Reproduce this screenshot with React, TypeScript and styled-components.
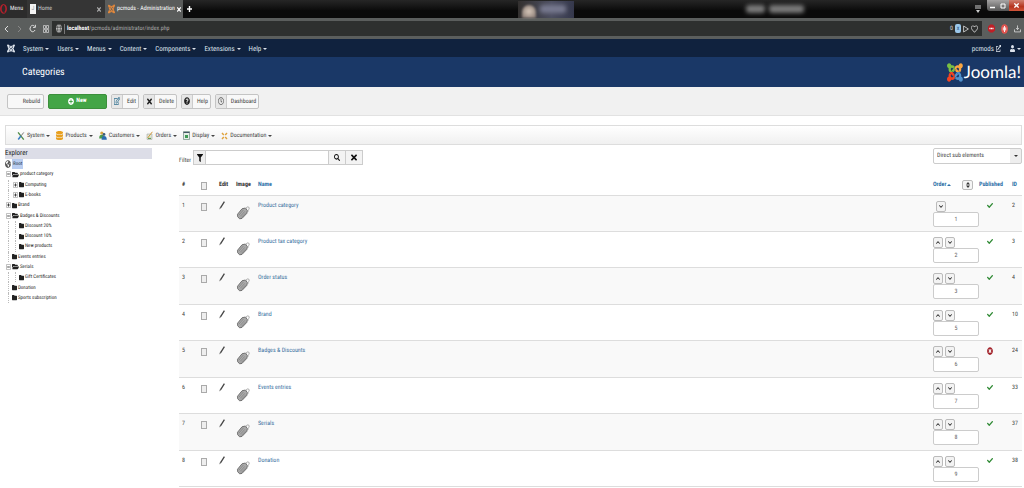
import React, { useState } from 'react';
import styled, { createGlobalStyle, css } from 'styled-components';
import type { IconType } from 'react-icons';
import { FaJoomla, FaOpera, FaFilter, FaSearch, FaTimes, FaCheck, FaTimesCircle, FaUser, FaExternalLinkAlt, FaQuestionCircle, FaPlusCircle, FaChevronUp, FaChevronDown, FaFolder, FaFolderOpen, FaGlobe, FaGlobeAmericas, FaRegHeart, FaRegClock, FaRegEdit, FaDatabase, FaUserFriends } from 'react-icons/fa';

const Global = createGlobalStyle`
  * { box-sizing: border-box; }
  body { margin: 0; background: #fff; text-rendering: geometricPrecision; }
  body, button, input, select { font-family: "Roboto Condensed", Roboto, "Liberation Sans", Arial, sans-serif; font-size: 6px; line-height: 10px; color: #444; }
  button, input, select { margin: 0; padding: 0; text-rendering: inherit; }
  a { text-decoration: none; color: inherit; }
  svg { display: block; flex: none; }
`;

const Row = css`display: flex; align-items: center;`;

const IconBox = styled.span<{ $w: number; $h: number; $color?: string }>`
  display: block;
  flex: none;
  width: ${p => p.$w}px;
  height: ${p => p.$h}px;
  color: ${p => p.$color || 'inherit'};
  svg { width: 100%; height: 100%; }
`;
const Icon = ({ i: Glyph, w, h, color }: { i: IconType; w: number; h: number; color?: string }) => (
  <IconBox $w={w} $h={h} $color={color}><Glyph preserveAspectRatio="none" /></IconBox>
);

/* ---- browser frame ---- */
const TabStrip = styled.div`
  ${Row}
  height: 18px;
  background: linear-gradient(#262626, #0a0a0a 60%);
  color: #ddd;
`;
const MenuButton = styled.button`
  ${Row}
  gap: 3px;
  width: 27px;
  height: 18px;
  border: 0;
  background: #2c2c2c;
  color: #eee;
  white-space: nowrap;
`;
const Tab = styled.div<{ $active?: boolean }>`
  ${Row}
  gap: 2px;
  width: 78px;
  height: 18px;
  padding: 0 4px 0 3px;
  background: ${p => (p.$active ? '#5a5c5b' : '#353535')};
  color: ${p => (p.$active ? '#fff' : '#ccc')};
  white-space: nowrap;
`;
const PageGlyph = styled.span`
  width: 6px;
  height: 10px;
  background: #f4f4f4;
  color: #999;
  text-align: center;
`;
const IconButton = styled.button`
  ${Row}
  justify-content: center;
  border: 0;
  background: none;
  color: inherit;
`;
const TabClose = styled(IconButton)`margin-left: auto;`;
const NewTab = styled(IconButton)`width: 13px; color: #fff;`;
const StripSpace = styled.div<{ $grow: number }>`flex: ${p => p.$grow} 1 0;`;
const Avatar = styled.div`
  ${Row}
  gap: 4px;
  width: 56px;
  height: 17px;
  padding-left: 4px;
  background: linear-gradient(90deg, #33302f, #4c4e60 60%, #35384c);
`;
const Face = styled.span`
  width: 14px;
  height: 13px;
  margin-top: 4px;
  border-radius: 7px 7px 0 0;
  background: radial-gradient(#d8c8ba, #7d706a);
  filter: blur(1px);
`;
const Smudge = styled.span<{ $w: number }>`
  width: ${p => p.$w}px;
  height: 8px;
  border-radius: 3px;
  background: #77798f;
  filter: blur(2px);
`;
const GreySmudges = styled.div`${Row} gap: 4px; filter: grayscale(1);`;
const WindowControls = styled.div`
  display: flex;
  align-self: flex-start;
  margin-left: 6px;
  height: 11px;
  border-radius: 0 0 0 3px;
  overflow: hidden;
`;
const WindowButton = styled(IconButton)<{ $close?: boolean }>`
  width: ${p => (p.$close ? '15px' : '11px')};
  background: ${p => (p.$close ? 'linear-gradient(#d08070, #b5341f 60%, #d2553a)' : 'linear-gradient(#a5a3a3, #555)')};
  color: #fff;
`;
const AddressBar = styled.div`
  ${Row}
  height: 21px;
  background: #5b5e5d;
  color: #ddd;
`;
const BarButton = styled(IconButton)`width: 13px; height: 14px;`;
const AddressBox = styled.div`
  ${Row}
  gap: 2px;
  flex: 1;
  height: 15px;
  margin-right: 3px;
  padding: 0 4px;
  background: #2e302f;
`;
const AddressText = styled.a`
  flex: 1;
  padding-left: 2px;
  border-left: 1px solid #777;
  color: #aaa;
  b { color: #fff; }
`;
const Badge = styled.span`
  ${Row}
  justify-content: center;
  width: 6px;
  height: 9px;
  border-radius: 2px;
  background: #9cc8ea;
  color: #1b4a78;
`;

/* ---- Joomla header ---- */
const NavBar = styled.nav`
  ${Row}
  height: 18px;
  padding: 1px 3px 0 7px;
  background: #10223e;
  color: #dde3ec;
  font-size: 7px;
`;
const NavLinks = styled.div`${Row} flex: 1; gap: 8px; margin-left: 8px;`;
const NavLink = styled.a`${Row} gap: 2px; white-space: nowrap;`;
const UserArea = styled.div`${Row} gap: 9px;`;
const Caret = styled.span`
  display: block;
  border: 2px solid transparent;
  border-top-color: currentColor;
  border-bottom: 0;
`;
const Header = styled.header`
  ${Row}
  justify-content: space-between;
  height: 30px;
  padding: 0 3px 0 22px;
  background: #1a3867;
  color: #fff;
`;
const Title = styled.h1`margin: 0; padding-top: 2px; font-size: 10px; line-height: 12px; font-weight: 400;`;
const Brand = styled.div`${Row} gap: 1px; font: 17px/20px Lato, "Liberation Sans", sans-serif;`;
const BrandMark = styled.div`display: grid;`;
const MarkPart = styled.div<{ $clip: string; $color: string }>`
  grid-area: 1 / 1;
  color: ${p => p.$color};
  clip-path: polygon(${p => p.$clip});
`;

const Toolbar = styled.div`
  ${Row}
  gap: 4px;
  height: 29px;
  padding: 0 7px;
  background: #f1f1f1;
  border-bottom: 1px solid #e2e2e2;
`;
const ToolButton = styled.button<{ $w: number; $primary?: boolean }>`
  ${Row}
  justify-content: center;
  gap: 2px;
  width: ${p => p.$w}px;
  height: 15px;
  border: 1px solid ${p => (p.$primary ? '#3c8f3c' : '#c4c4c4')};
  border-radius: 2px;
  background: ${p => (p.$primary ? '#43a546' : '#f8f8f8')};
  color: ${p => (p.$primary ? '#fff' : '#444')};
  overflow: hidden;
  white-space: nowrap;
`;
const ToolIcon = styled.span`
  ${Row}
  justify-content: center;
  width: 11px;
  height: 13px;
  border-right: 1px solid #ccc;
  background: #e7e7e7;
  color: #222;
`;
const ToolText = styled.span`flex: 1; padding-top: 1px; text-align: center;`;
const RebuildText = styled(ToolText)`padding-left: 12px;`;

const SubMenu = styled.nav`
  ${Row}
  gap: 6px;
  height: 20px;
  margin: 9px 2px 3px 5px;
  padding: 1px 0 0 11px;
  border: 1px solid #ddd;
  background: linear-gradient(#fff, #f0f0f0);
`;
const SubLink = styled.a`${Row} gap: 2px; white-space: nowrap;`;

/* ---- page body ---- */
const Body = styled.main`display: flex; align-items: flex-start; padding: 0 2px 0 5px;`;
const Sidebar = styled.aside`width: 147px; margin-right: 27px;`;
const SideTitle = styled.h2`
  margin: 0;
  height: 11px;
  font-size: 7px;
  line-height: 11px;
  font-weight: 400;
  background: #dcdde7;
  color: #222;
`;
const Tree = styled.ul`
  display: grid;
  grid-auto-rows: 1fr;
  min-height: 144px;
  margin: 0;
  padding: 0;
  list-style: none;
  font-size: 5px;
  color: #222;
`;
const TreeItem = styled.li<{ $root?: boolean }>`
  ${Row}
  gap: 1px;
  padding-left: ${p => (p.$root ? 0 : 1)}px;
`;
const Rail = styled.span<{ $wide?: boolean }>`
  align-self: stretch;
  width: 3px;
  margin-right: ${p => (p.$wide ? 3 : 2)}px;
  border-right: 1px dotted #bbb;
`;
const Selected = styled.a`padding: 0 1px; background: #b9cdf0; color: #234;`;
const Content = styled.section`flex: 1; min-width: 0;`;
const FilterRow = styled.form`
  display: flex;
  align-items: flex-start;
  height: 20px;
`;
const FilterLabel = styled.label`width: 14px; padding-top: 8px;`;
const Addon = styled.span`
  ${Row}
  justify-content: center;
  width: 12px;
  height: 15px;
  margin-top: 2px;
  border: 1px solid #ccc;
  border-right: 0;
  background: #eee;
  color: #111;
`;
const FilterInput = styled.input`
  width: 124px;
  height: 15px;
  margin-top: 2px;
  padding: 0 3px;
  border: 1px solid #ccc;
`;
const FilterButton = styled.button`
  ${Row}
  justify-content: center;
  width: 17px;
  height: 15px;
  margin-top: 2px;
  border: 1px solid #ccc;
  border-left: 0;
  background: #f3f3f3;
  color: #111;
`;
const SelectWrap = styled.div`
  position: relative;
  width: 89px;
  margin-left: auto;
`;
const Select = styled.select`
  appearance: none;
  width: 100%;
  height: 16px;
  padding: 0 14px 0 3px;
  border: 1px solid #ccc;
  border-radius: 2px;
  background: linear-gradient(90deg, #fff, #fff) no-repeat left / 76px 100%, #eee;
`;
const SelectArrow = styled.span`
  position: absolute;
  right: 4px;
  top: 7px;
  pointer-events: none;
  color: #333;
`;

const Table = styled.table`
  width: 100%;
  height: 319px;
  table-layout: fixed;
  border-collapse: collapse;
`;
const Th = styled.th<{ $w?: number; $flush?: boolean }>`
  width: ${p => (p.$w ? p.$w + 'px' : 'auto')};
  height: 27px;
  padding: 12px 0 0 ${p => (p.$flush ? 0 : 3)}px;
  text-align: left;
  vertical-align: top;
  color: #333;
  font-weight: 700;
  white-space: nowrap;
  a { color: #2f70a8; }
`;
const Tr = styled.tr`
  border-top: 1px solid #ddd;
  &:nth-child(odd) { background: #f9f9f9; }
  &:last-child { border-bottom: 1px solid #ddd; }
`;
const Td = styled.td`
  height: 36px;
  padding: 5px 0 0 3px;
  vertical-align: top;
  a { color: #39719f; }
`;
const IconTd = styled(Td)`padding: 6px 0 0 8px;`;
const ImageTd = styled(Td)`padding-top: 9px;`;
const OrderTd = styled(Td)`padding-left: 0;`;
const CheckTd = styled(Td)`padding-top: 7px;`;
const Check = styled.input`
  display: block;
  appearance: none;
  width: 6px;
  height: 8px;
  border: 1px solid #aaa;
  background: #eee;
  &:checked { background: #39719f; }
`;
const HeadCheck = styled(Check)`margin-top: 2px;`;
const OrderHead = styled.span`${Row} justify-content: space-between; padding-right: 6px;`;
const SortLink = styled.a`${Row} gap: 1px;`;
const UpCaret = styled(Caret)`transform: rotate(180deg);`;
const SortButton = styled.button`
  ${Row}
  justify-content: center;
  width: 11px;
  height: 10px;
  border: 1px solid #bbb;
  border-radius: 2px;
  background: #f5f5f5;
`;
const Arrows = styled.div<{ $only?: boolean }>`
  display: flex;
  gap: 2px;
  padding-left: ${p => (p.$only ? 3 : 0)}px;
`;
const OrderButton = styled.button`
  ${Row}
  justify-content: center;
  width: 10px;
  height: 11px;
  border: 1px solid #bbb;
  border-radius: 2px;
  background: #f3f3f3;
  color: #111;
`;
const OrderInput = styled.input`
  display: block;
  width: 46px;
  height: 15px;
  border: 1px solid #ccc;
  border-radius: 2px;
  background: #fff;
  text-align: center;
  color: #666;
`;

const MARK = [
  { color: '#7ac143', clip: '0 0, 50% 0, 50% 50%, 0 50%' },
  { color: '#f9a541', clip: '50% 0, 100% 0, 100% 50%, 50% 50%' },
  { color: '#f44321', clip: '0 50%, 50% 50%, 50% 100%, 0 100%' },
  { color: '#5091cd', clip: '50% 50%, 100% 50%, 100% 100%, 50% 100%' },
];
const JoomlaMark = () => (
  <BrandMark>
    {MARK.map(m => <MarkPart key={m.color} $color={m.color} $clip={m.clip}><Icon i={FaJoomla} w={16} h={21} /></MarkPart>)}
  </BrandMark>
);

const Pencil = () => (
  <svg width="6" height="9" viewBox="0 0 6 9"><path d="M5.4 0.6 1.6 6.6" stroke="#444" strokeWidth="1.3" /><path d="M.4 8.6 1 6l1.2.8Z" fill="#444" /></svg>
);
const TagIcon = () => (
  <svg width="14" height="15" viewBox="0 0 14 15">
    <path d="M1.6 9.2 6 3.8 9.4 3 11.4 5.6 10.8 8.4 6 13.4 3.6 13.8 1.6 11.6Z" fill="#aaa" stroke="#666" strokeWidth=".9" />
    <path d="M3 10 7.4 5M4.2 11.4 8.8 6.4M5.4 12.4 9.8 7.8" stroke="#777" strokeWidth=".6" />
    <path d="M9.6 4.4C10 1.4 13 1.2 13.2 3c.2 1.4-1.2 1.6-1.4 4" fill="none" stroke="#999" strokeWidth=".8" />
  </svg>
);
const Expander = ({ open }: { open?: boolean }) => (
  <svg width="5" height="6" viewBox="0 0 5 6"><path d="M.5.5h4v5h-4Z" fill="#fff" stroke="#999" strokeWidth=".6" /><path d={open ? 'M1.2 3h2.6' : 'M1.2 3h2.6M2.5 1.4v3.2'} stroke="#222" strokeWidth=".8" /></svg>
);
const Plus = () => (
  <svg width="5" height="8" viewBox="0 0 5 8"><path d="M2.5 1v6M0 4h5" stroke="#fff" strokeWidth="1.4" /></svg>
);
const ChevronIcon = ({ d, color }: { d: string; color: string }) => (
  <svg width="5" height="8" viewBox="0 0 5 8"><path d={d} fill="none" stroke={color} strokeWidth="1" /></svg>
);
const ReloadIcon = () => (
  <svg width="7" height="9" viewBox="0 0 7 9"><path d="M5.6 2.4A2.6 3.2 0 1 0 6 6M6.4.8v2.6H4" fill="none" stroke="#ddd" strokeWidth="1" /></svg>
);
const GridIcon = () => (
  <svg width="6" height="8" viewBox="0 0 6 8"><path d="M.5.5h2v3h-2ZM3.5.5h2v3h-2ZM.5 4.5h2v3h-2ZM3.5 4.5h2v3h-2Z" fill="none" stroke="#ccc" strokeWidth=".8" /></svg>
);
const OrdersIcon = () => (
  <svg width="7" height="9" viewBox="0 0 7 9"><path d="M1 3h5v5.4H1Z" fill="#dfe6d5" stroke="#999" strokeWidth=".5" /><path d="M1.6 7 6.4.8" stroke="#d59a3c" strokeWidth="1" /><path d="M2 7.4h3" stroke="#5b9a4a" /></svg>
);
const DisplayIcon = () => (
  <svg width="7" height="9" viewBox="0 0 7 9"><path d="M.5.5h6v8h-6Z" fill="#e3eee5" stroke="#6f8a80" strokeWidth=".7" /><path d="M.5 1.5h6" stroke="#456" /><path d="M2 4h3v3H2Z" fill="#3f9a55" /></svg>
);
const DocsIcon = () => (
  <svg width="7" height="8" viewBox="0 0 7 8"><path d="M1 1l1.8 2M6 1 4.2 3M1 7l1.8-2M6 7 4.2 5" stroke="#e0a33c" strokeWidth="1.4" /></svg>
);
const ToolsIcon = () => (
  <svg width="8" height="10" viewBox="0 0 9 10"><path d="M1.2 1 7.6 9" stroke="#4f8a45" strokeWidth="1.5" /><path d="M7.6 1 4.6 4.8" stroke="#777" strokeWidth="1.1" /><path d="M4.4 5 1.4 9" stroke="#3b7fc4" strokeWidth="1.8" /></svg>
);
const CustomersIcon = () => (
  <svg width="8" height="9" viewBox="0 0 8 9"><circle cx="2.8" cy="2" r="1.6" fill="#d9a441" /><path d="M.2 7.4C.2 4.6 1.2 3.8 2.8 3.8s2.6.8 2.6 3.6Z" fill="#4d9a4a" /><circle cx="5" cy="3.4" r="1.4" fill="#3a5a7a" /><path d="M2.6 8.8c0-2.8.8-3.8 2.4-3.8s2.8 1 2.8 3.8Z" fill="#2a6db0" /></svg>
);

const NAV = ['System', 'Users', 'Menus', 'Content', 'Components', 'Extensions', 'Help'];

const SUB = [
  { text: 'System', icon: <ToolsIcon /> },
  { text: 'Products', icon: <Icon i={FaDatabase} w={7} h={9} color="#e8a020" /> },
  { text: 'Customers', icon: <CustomersIcon /> },
  { text: 'Orders', icon: <OrdersIcon /> },
  { text: 'Display', icon: <DisplayIcon /> },
  { text: 'Documentation', icon: <DocsIcon /> },
];

type TreeNode = { text: string; depth: 1 | 2; state?: 'open' | 'closed' };
const TREE: TreeNode[] = [
  { text: 'product category', depth: 1, state: 'open' },
  { text: 'Computing', depth: 2, state: 'closed' },
  { text: 'E-books', depth: 2, state: 'closed' },
  { text: 'Brand', depth: 1, state: 'closed' },
  { text: 'Badges & Discounts', depth: 1, state: 'open' },
  { text: 'Discount 20%', depth: 2 },
  { text: 'Discount 10%', depth: 2 },
  { text: 'New products', depth: 2 },
  { text: 'Events entries', depth: 1 },
  { text: 'Serials', depth: 1, state: 'open' },
  { text: 'Gift Certificates', depth: 2 },
  { text: 'Donation', depth: 1 },
  { text: 'Sports subscription', depth: 1 },
];

const ROWS = [
  { name: 'Product category', order: 1, id: 2, ok: true },
  { name: 'Product tax category', order: 2, id: 3, ok: true },
  { name: 'Order status', order: 3, id: 4, ok: true },
  { name: 'Brand', order: 5, id: 10, ok: true },
  { name: 'Badges & Discounts', order: 6, id: 24, ok: false },
  { name: 'Events entries', order: 7, id: 33, ok: true },
  { name: 'Serials', order: 8, id: 37, ok: true },
  { name: 'Donation', order: 9, id: 38, ok: true },
];

export default function App() {
  const [filter, setFilter] = useState('');
  return (
    <>
      <Global />
      <TabStrip>
        <MenuButton><Icon i={FaOpera} w={7} h={10} color="#b3202c" />Menu</MenuButton>
        <Tab><PageGlyph>J</PageGlyph>Home<TabClose aria-label="Close Home"><Icon i={FaTimes} w={4} h={7} color="#aaa" /></TabClose></Tab>
        <Tab $active><Icon i={FaJoomla} w={7} h={10} color="#e98a3a" />pcmods - Administration<TabClose aria-label="Close tab"><Icon i={FaTimes} w={4} h={7} /></TabClose></Tab>
        <NewTab aria-label="New tab"><Plus /></NewTab>
        <StripSpace $grow={32} />
        <Avatar><Face /><Smudge $w={26} /></Avatar>
        <StripSpace $grow={17} />
        <GreySmudges><Smudge $w={19} /><Smudge $w={35} /></GreySmudges>
        <StripSpace $grow={17} />
        <svg width="6" height="8" viewBox="0 0 6 8"><path d="M0 1h6M0 3h6" stroke="#ccc" /><path d="M1 5h4L3 8Z" fill="#ccc" /></svg>
        <WindowControls>
          <WindowButton aria-label="Minimize"><svg width="5" height="6" viewBox="0 0 5 6"><path d="M0 4.5h5" stroke="#fff" strokeWidth="1.6" /></svg></WindowButton>
          <WindowButton aria-label="Restore"><svg width="6" height="6" viewBox="0 0 6 6"><path d="M1 1h4v4H1Z" fill="none" stroke="#fff" /></svg></WindowButton>
          <WindowButton $close aria-label="Close"><Icon i={FaTimes} w={5} h={7} /></WindowButton>
        </WindowControls>
      </TabStrip>
      <AddressBar>
        <BarButton aria-label="Back"><ChevronIcon d="M4 1 1 4l3 3" color="#ddd" /></BarButton>
        <BarButton aria-label="Forward"><ChevronIcon d="M1 1l3 3-3 3" color="#888" /></BarButton>
        <BarButton aria-label="Reload"><ReloadIcon /></BarButton>
        <BarButton aria-label="Speed dial"><GridIcon /></BarButton>
        <AddressBox>
          <Icon i={FaGlobe} w={6} h={9} color="#bbb" />
          <AddressText href="#"><b>localhost</b>/pcmods/administrator/index.php</AddressText>
          <span>0</span>
          <Badge>x</Badge>
          <svg width="6" height="8" viewBox="0 0 6 8"><path d="M.6 1 5.4 4 .6 7Z" fill="none" stroke="#ccc" strokeWidth=".9" /></svg>
          <Icon i={FaRegHeart} w={7} h={8} color="#ccc" />
        </AddressBox>
        <BarButton aria-label="Ad blocker"><svg width="7" height="9" viewBox="0 0 8 9"><path d="M2.4 0h3.2L8 2.6v3.8L5.6 9H2.4L0 6.4V2.6Z" fill="#c01f26" /><path d="M1.6 4.5h4.8" stroke="#fff" strokeWidth="1.5" strokeDasharray="1.3 .4" /></svg></BarButton>
        <BarButton aria-label="Blocker"><svg width="7" height="10" viewBox="0 0 7 10"><ellipse cx="3.5" cy="5" rx="3.5" ry="4.8" fill="#e0544f" /><path d="M3.5 2v6M2.3 3.4v3M4.7 3.4v3" stroke="#fff" strokeWidth=".9" /></svg></BarButton>
        <BarButton aria-label="Downloads"><svg width="7" height="9" viewBox="0 0 8 9"><path d="M4 1v4.6M2.4 4 4 5.8 5.6 4M.6 5.6v2.8h6.8V5.6" fill="none" stroke="#ddd" strokeWidth=".9" /></svg></BarButton>
      </AddressBar>

      <NavBar>
        <Icon i={FaJoomla} w={8} h={9} />
        <NavLinks>{NAV.map(t => <NavLink href="#" key={t}>{t}<Caret /></NavLink>)}</NavLinks>
        <UserArea>
          <NavLink href="#">pcmods<Icon i={FaExternalLinkAlt} w={5} h={7} /></NavLink>
          <NavLink href="#" aria-label="User menu"><Icon i={FaUser} w={5} h={7} /><Caret /></NavLink>
        </UserArea>
      </NavBar>
      <Header>
        <Title>Categories</Title>
        <Brand><JoomlaMark />Joomla!</Brand>
      </Header>

      <Toolbar>
        <ToolButton $w={37}><RebuildText>Rebuild</RebuildText></ToolButton>
        <ToolButton $w={59} $primary><Icon i={FaPlusCircle} w={6} h={7} /><b>New</b></ToolButton>
        <ToolButton $w={28}><ToolIcon><Icon i={FaRegEdit} w={6} h={8} color="#2f6f8f" /></ToolIcon><ToolText>Edit</ToolText></ToolButton>
        <ToolButton $w={34}><ToolIcon><Icon i={FaTimes} w={5} h={9} /></ToolIcon><ToolText>Delete</ToolText></ToolButton>
        <ToolButton $w={30}><ToolIcon><Icon i={FaQuestionCircle} w={6} h={8} /></ToolIcon><ToolText>Help</ToolText></ToolButton>
        <ToolButton $w={44}><ToolIcon><Icon i={FaRegClock} w={6} h={8} color="#555" /></ToolIcon><ToolText>Dashboard</ToolText></ToolButton>
      </Toolbar>
      <SubMenu>{SUB.map(s => <SubLink href="#" key={s.text}>{s.icon}{s.text}<Caret /></SubLink>)}</SubMenu>

      <Body>
        <Sidebar>
          <SideTitle>Explorer</SideTitle>
          <Tree>
            <TreeItem $root><Icon i={FaGlobeAmericas} w={6} h={8} color="#555" /><Selected href="#">Root</Selected></TreeItem>
            {TREE.map(n => (
              <TreeItem key={n.text}>
                {n.depth === 2 && <Rail $wide />}
                {n.state ? <Expander open={n.state === 'open'} /> : <Rail />}
                {n.state === 'open'
                  ? <Icon i={FaFolderOpen} w={7} h={7} />
                  : <Icon i={FaFolder} w={5} h={7} />}
                <a href="#">{n.text}</a>
              </TreeItem>
            ))}
          </Tree>
        </Sidebar>
        <Content>
          <FilterRow onSubmit={e => e.preventDefault()}>
            <FilterLabel htmlFor="filter">Filter</FilterLabel>
            <Addon><Icon i={FaFilter} w={6} h={8} /></Addon>
            <FilterInput id="filter" value={filter} onChange={e => setFilter(e.target.value)} />
            <FilterButton aria-label="Search"><Icon i={FaSearch} w={6} h={7} /></FilterButton>
            <FilterButton type="button" aria-label="Clear" onClick={() => setFilter('')}><Icon i={FaTimes} w={6} h={9} /></FilterButton>
            <SelectWrap>
              <Select aria-label="Elements shown"><option>Direct sub elements</option></Select>
              <SelectArrow><Caret /></SelectArrow>
            </SelectWrap>
          </FilterRow>
          <Table>
            <thead>
              <tr>
                <Th $w={19}>#</Th>
                <Th $w={18}><HeadCheck type="checkbox" aria-label="Select all" /></Th>
                <Th $w={17}>Edit</Th>
                <Th $w={22}>Image</Th>
                <Th><a href="#">Name</a></Th>
                <Th $w={46} $flush><OrderHead><SortLink href="#">Order<UpCaret /></SortLink><SortButton aria-label="Save order"><svg width="4" height="6" viewBox="0 0 4 6"><path d="M2 0 4 2.4H0ZM2 6 0 3.6h4Z" fill="#333" /></svg></SortButton></OrderHead></Th>
                <Th $w={30} $flush><a href="#">Published</a></Th>
                <Th $w={13}><a href="#">ID</a></Th>
              </tr>
            </thead>
            <tbody>
              {ROWS.map((r, i) => (
                <Tr key={r.id}>
                  <Td>{i + 1}</Td>
                  <CheckTd><Check type="checkbox" aria-label={`Select ${r.name}`} /></CheckTd>
                  <Td><Pencil /></Td>
                  <ImageTd><TagIcon /></ImageTd>
                  <Td><a href="#">{r.name}</a></Td>
                  <OrderTd>
                    <Arrows $only={i === 0}>
                      {i > 0 && <OrderButton aria-label="Move up"><Icon i={FaChevronUp} w={4} h={5} /></OrderButton>}
                      <OrderButton aria-label="Move down"><Icon i={FaChevronDown} w={4} h={5} /></OrderButton>
                    </Arrows>
                    <OrderInput defaultValue={r.order} aria-label={`Order of ${r.name}`} />
                  </OrderTd>
                  <IconTd>{r.ok ? <Icon i={FaCheck} w={6} h={7} color="#2f8a34" /> : <Icon i={FaTimesCircle} w={6} h={8} color="#a3232b" />}</IconTd>
                  <Td>{r.id}</Td>
                </Tr>
              ))}
            </tbody>
          </Table>
        </Content>
      </Body>
    </>
  );
}
